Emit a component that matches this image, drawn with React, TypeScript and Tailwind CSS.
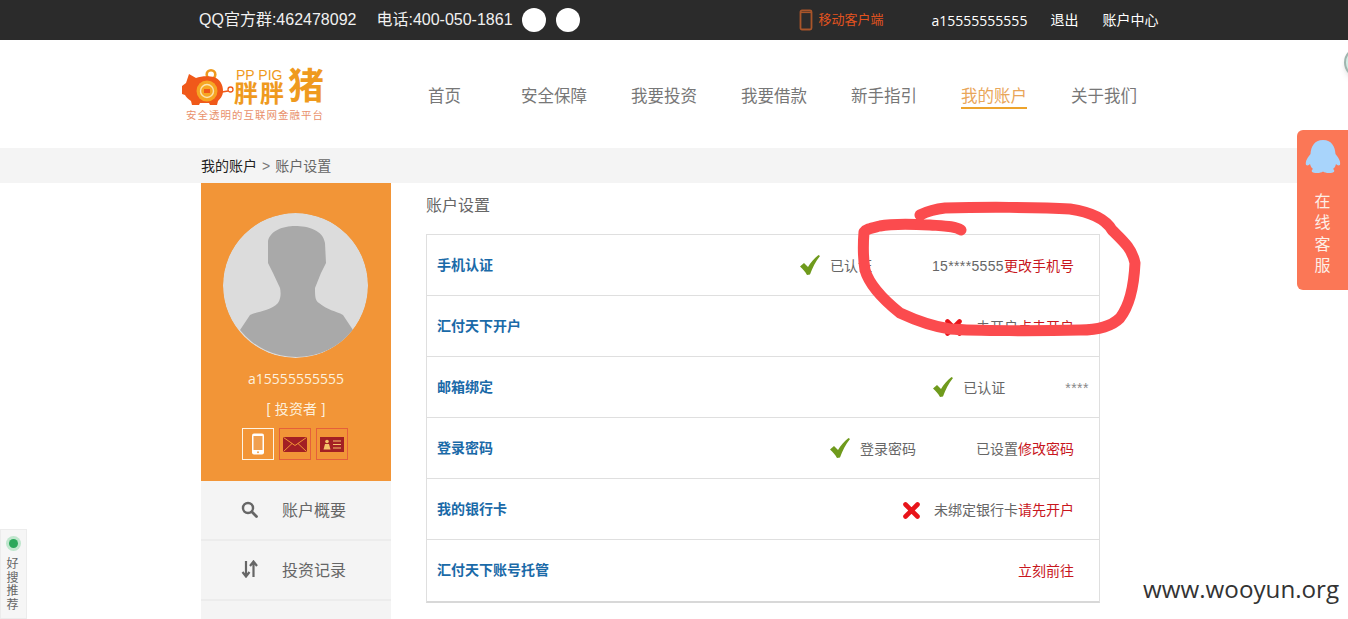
// App.tsx
import React from 'react';

const cjk = "font-['Liberation_Sans','Noto_Sans_CJK_SC',sans-serif]";

const Check = () => (
  <svg width="20" height="20" viewBox="0 0 20 20" className="shrink-0">
    <path d="M0 11.5 L4 8 L8 12 C10.5 7.5 14 3.5 18.5 0 L20 1 C15.5 6.5 12.5 12.5 10 19.5 L7 20 C5 16.5 3 14 0 11.5 Z" fill="#6f9a1c" />
  </svg>
);

const Cross = () => (
  <svg width="17" height="17" viewBox="0 0 17 17" className="shrink-0">
    <path d="M2.5 2.5 L14.5 14.5 M14.5 2.5 L2.5 14.5" stroke="#e8141a" strokeWidth="4.6" strokeLinecap="round" />
  </svg>
);

const Logo = () => (
  <div className="flex w-[145px] flex-col">
    <div className="flex h-[38px] items-end">
      <svg width="53" height="38" viewBox="0 0 53 38" className="shrink-0">
        <circle cx="30" cy="6.5" r="4.3" fill="none" stroke="#ef9a1e" strokeWidth="2.6" />
        <path d="M8 6 L15 10 C20 8 28 8 33 9 C39 11 42 17 42 23 C42 28 39 31 37 33 L36 37 L29 37 L28 35 L19 35 L18 37 L11 37 L10 33 C7 31 5 29 4 27 L1 26 L1 18 L5 15 Z" fill="#f0591a" />
        <circle cx="26" cy="23" r="10.5" fill="#f6a623" />
        <circle cx="26" cy="23" r="6.5" fill="none" stroke="#fbe3b0" strokeWidth="1.4" />
        <rect x="23" y="21" width="6" height="4" fill="#f0591a" />
        <path d="M41 24 L47 23" stroke="#f0591a" strokeWidth="1.4" />
        <circle cx="49.5" cy="21.5" r="2.5" fill="none" stroke="#f0591a" strokeWidth="1.3" />
      </svg>
      <div className="flex items-end">
        <div className="relative w-[54px]">
          <span className="absolute left-[2px] top-[-13px] text-[14px] leading-[13px] whitespace-nowrap text-[#ef9a1e]">PP PIG</span>
          <span className="block text-[24px] leading-[24px] font-bold tracking-[2px] whitespace-nowrap text-[#ef9a1e]">胖胖</span>
        </div>
        <span className="text-[36px] leading-[38px] font-bold text-[#ef9a1e]">猪</span>
      </div>
    </div>
    <span className="mt-[2px] ml-[5px] text-[10.5px] leading-[14px] tracking-[1px] whitespace-nowrap text-[#e9906a] font-['Noto_Sans_CJK_SC',serif]">
      安全透明的互联网金融平台
    </span>
  </div>
);

const navItems = [
  { label: '首页', cls: 'w-[93px]' },
  { label: '安全保障', cls: 'w-[110px]' },
  { label: '我要投资', cls: 'w-[110px]' },
  { label: '我要借款', cls: 'w-[110px]' },
  { label: '新手指引', cls: 'w-[110px]' },
  { label: '我的账户', cls: 'w-[110px]', active: true },
  { label: '关于我们', cls: 'w-[70px]' },
];

const rows = [
  {
    label: '手机认证',
    ok: true,
    status: '已认证',
    gap: 'w-[60px]',
    value: '15****5555',
    valueCls: 'tracking-[0.35px]',
    link: '更改手机号',
    pad: 'pr-[25px]',
  },
  { label: '汇付天下开户', ok: false, status: '未开户', gap: 'w-0', link: '点击开户', pad: 'pr-[25px]', iconGap: 'mr-[14px]' },
  { label: '邮箱绑定', ok: true, status: '已认证', gap: 'w-[60px]', value: '****', valueCls: 'tracking-[0.5px] text-[#888]', pad: 'pr-[10px]' },
  { label: '登录密码', ok: true, status: '登录密码', gap: 'w-[60px]', value: '已设置', link: '修改密码', pad: 'pr-[25px]' },
  { label: '我的银行卡', ok: false, status: '未绑定银行卡', gap: 'w-0', link: '请先开户', pad: 'pr-[25px]', iconGap: 'mr-[14px]' },
  { label: '汇付天下账号托管', link: '立刻前往', pad: 'pr-[25px]' },
];

export default function App() {
  return (
    <div className={`relative h-[619px] w-full overflow-hidden bg-white ${cjk}`}>
      {/* 顶部黑条 */}
      <div className="flex h-10 items-center bg-[#2b2b2b] pl-[199px] text-white">
        <span className="text-[16px] text-[#f1f1f1]">QQ官方群:462478092</span>
        <span className="ml-[20px] text-[16px] text-[#f1f1f1]">电话:400-050-1861</span>
        <span className="ml-[9px] h-6 w-6 rounded-full bg-white" />
        <span className="ml-[10px] h-6 w-6 rounded-full bg-white" />
        <svg width="14" height="22" viewBox="0 0 14 22" className="ml-[219px]">
          <rect x="1.5" y="1.5" width="11" height="19" rx="1.5" fill="none" stroke="#a8552a" strokeWidth="1.8" />
          <path d="M1.5 3.5 H12.5" stroke="#a8552a" strokeWidth="1.2" />
        </svg>
        <span className="ml-[6px] text-[13px] text-[#e2531f]">移动客户端</span>
        <span className="ml-[48px] text-[14px] font-['Open_Sans',sans-serif] text-white">a15555555555</span>
        <span className="ml-[23px] text-[14px]">退出</span>
        <span className="ml-[24px] text-[14px]">账户中心</span>
      </div>

      {/* 头部导航 */}
      <div className="flex h-[108px] items-start bg-white pl-[181px]">
        <div className="mt-[28px]">
          <Logo />
        </div>
        <nav className="ml-[102px] mt-[44px] flex text-[16.5px] text-[#777]">
          {navItems.map((item) => (
            <div key={item.label} className={item.cls}>
              <span
                className={
                  item.active
                    ? 'inline-block h-[24px] border-b-2 border-[#eda32c] leading-[22px] text-[#e9a65a]'
                    : 'inline-block h-[24px] leading-[22px]'
                }
              >
                {item.label}
              </span>
            </div>
          ))}
        </nav>
      </div>

      {/* 面包屑 */}
      <div className="flex h-[35px] items-center bg-[#f4f4f4] pt-px pl-[201px] text-[14px]">
        <span className="text-[#222]">我的账户</span>
        <span className="mx-[5px] text-[#777]">&gt;</span>
        <span className="text-[#666]">账户设置</span>
      </div>

      <div className="flex pl-[201px]">
        {/* 左侧栏 */}
        <aside className="w-[190px] shrink-0">
          <div className="flex h-[298px] flex-col items-center bg-[#f29537] pt-[30px]">
            <svg width="145" height="145" viewBox="0 0 145 145" className="mr-px rounded-full">
              <circle cx="72.5" cy="72.5" r="72.5" fill="#dcdcdc" />
              <path d="M17 117 L27 102 C35 98 48 98 55 90 C58 85 58 80 57 75 L50 60 L45 50 L45 28 C47 18 60 13 72 13 C85 13 100 17 102 30 L103 50 L98 60 L92 75 C92 82 92 88 96 90 C104 97 113 98 120 102 L130 117 A72.5 72.5 0 0 1 17 117 Z" fill="#a9a9a9" />
            </svg>
            <span className="mt-[11px] text-[14px] leading-[20px] font-['Open_Sans',sans-serif] text-[#fdf0dc]">a15555555555</span>
            <span className="mt-[10px] text-[14px] leading-[20px] tracking-[0.2px] text-[#fdf0dc]">[ 投资者 ]</span>
            <div className="mt-[9px] mr-[2px] flex gap-[5px]">
              <div className="flex h-8 w-8 items-center justify-center border border-[#fdf3e3]">
                <svg width="14" height="22" viewBox="0 0 14 22">
                  <rect x="1" y="0.5" width="12" height="21" rx="2" fill="#fff" />
                  <rect x="2.5" y="3" width="9" height="14" fill="#f0a050" />
                  <circle cx="7" cy="19.3" r="1" fill="#f0a050" />
                </svg>
              </div>
              <div className="flex h-8 w-8 items-center justify-center border border-[#e5603a]">
                <svg width="24" height="15" viewBox="0 0 24 15">
                  <rect width="24" height="15" fill="#a31f24" />
                  <path d="M0.5 0.5 L12 8.5 L23.5 0.5 M0.5 14.5 L9 6.5 M23.5 14.5 L15 6.5" fill="none" stroke="#f29537" strokeWidth="1" />
                </svg>
              </div>
              <div className="flex h-8 w-8 items-center justify-center border border-[#e5603a]">
                <svg width="24" height="15" viewBox="0 0 24 15">
                  <rect width="24" height="15" fill="#a31f24" />
                  <circle cx="7" cy="4.5" r="1.8" fill="#f5c26b" />
                  <path d="M3.5 12.5 L5 7 H9 L10.5 12.5 Z" fill="#f5c26b" />
                  <path d="M13 4 H21 M13 7.5 H21 M13 11 H21" stroke="#f5c26b" strokeWidth="1.1" />
                </svg>
              </div>
            </div>
          </div>
          <div className="flex h-[60px] items-center border-b-2 border-[#ececec] bg-[#f4f4f4] pt-px pl-[40px] text-[16px] text-[#666]">
            <svg width="17" height="17" viewBox="0 0 17 17" className="mb-[3px]">
              <circle cx="7" cy="7" r="5" fill="none" stroke="#666" strokeWidth="2.4" />
              <path d="M10.8 10.8 L15.5 15.5" stroke="#666" strokeWidth="2.8" strokeLinecap="round" />
            </svg>
            <span className="ml-[24px]">账户概要</span>
          </div>
          <div className="flex h-[60px] items-center border-b-2 border-[#ececec] bg-[#f4f4f4] pt-px pl-[40px] text-[16px] text-[#666]">
            <svg width="17" height="18" viewBox="0 0 17 18" className="mb-[3px]">
              <path d="M5 1 V15 M1.5 12 L5 16.5 L8.5 12" fill="none" stroke="#666" strokeWidth="2.2" />
              <path d="M12.5 17 V3 M9 6 L12.5 1.5 L16 6" fill="none" stroke="#666" strokeWidth="2.2" />
            </svg>
            <span className="ml-[24px]">投资记录</span>
          </div>
          <div className="h-[40px] bg-[#f4f4f4]" />
        </aside>

        {/* 账户设置 */}
        <main className="ml-[35px] w-[674px]">
          <h2 className="h-[51px] pt-[11px] text-[16px] leading-[24px] font-normal text-[#666]">账户设置</h2>
          <div className="border border-b-2 border-[#dfdfdf] border-b-[#d8d8d8]">
            {rows.map((row, i) => (
              <div
                key={row.label}
                className={
                  i === rows.length - 1
                    ? 'flex h-[61px] items-center pl-[10px] text-[14px] text-[#666]'
                    : 'flex h-[61px] items-center border-b border-[#dfdfdf] pl-[10px] text-[14px] text-[#666]'
                }
              >
                <span className="font-bold text-[#1a6aa8]">{row.label}</span>
                <div className={`ml-auto flex items-center pt-[2px] ${row.pad}`}>
                  {row.ok === true && (
                    <span className="mr-[10px] mb-[2px]">
                      <Check />
                    </span>
                  )}
                  {row.ok === false && (
                    <span className={row.iconGap}>
                      <Cross />
                    </span>
                  )}
                  {row.status && <span>{row.status}</span>}
                  {row.gap && <span className={row.gap} />}
                  {row.value && <span className={row.valueCls}>{row.value}</span>}
                  {row.link && <span className="text-[#c8161d]">{row.link}</span>}
                </div>
              </div>
            ))}
          </div>
        </main>
      </div>

      {/* 右侧在线客服 */}
      <div className="absolute right-0 top-[130px] flex h-[160px] w-[51px] flex-col items-center rounded-l-[6px] bg-[#fb7756] pt-[10px]">
        <svg width="36" height="34" viewBox="0 0 36 34">
          <path d="M18 0 C27 0 30 7 30.5 14 C33 17 36 21 35 25 C33 26 32 25 31 24 C30.5 26 29.5 28 28 29 C29.5 30 30 31.5 28 32.5 C24 33.5 20 33 18 31.5 C16 33 12 33.5 8 32.5 C6 31.5 6.5 30 8 29 C6.5 28 5.5 26 5 24 C4 25 3 26 1 25 C0 21 3 17 5.5 14 C6 7 9 0 18 0 Z" fill="#a8d4fb" />
        </svg>
        <div className="mt-[17px] flex w-4 flex-col text-[16px] leading-[21.4px] text-[#fdeee6]">
          <span>在</span>
          <span>线</span>
          <span>客</span>
          <span>服</span>
        </div>
      </div>

      {/* 右上角露出的圆 */}
      <div className="absolute left-[1344px] top-[47px] h-[31px] w-[31px] rounded-full border-2 border-[#9fb5ae] bg-[#d5ece5] shadow-md" />

      {/* 左下角好搜推荐 */}
      <div className="absolute bottom-0 left-0 flex h-[90px] w-[27px] flex-col items-center border border-[#ececec] bg-[#f6f6f6] pt-[6px]">
        <div className="flex h-[15px] w-[15px] items-center justify-center rounded-full bg-[#bfe6cd]">
          <span className="h-[9px] w-[9px] rounded-full bg-[#2aa85a]" />
        </div>
        <div className="mt-[7px] mr-[2px] flex flex-col text-[12px] leading-[13.5px] text-[#666]">
          <span>好</span>
          <span>搜</span>
          <span>推</span>
          <span>荐</span>
        </div>
      </div>

      {/* 截图上的红色手绘圈 */}
      <svg className="pointer-events-none absolute left-0 top-0" width="1348" height="619" viewBox="0 0 1348 619">
        <path
          d="M961 230 C955 226 945 226 930 225 C910 224 890 224 880 226 C872 228 866 229 864 232 C863 245 863 258 865 270 C869 284 880 297 900 313 C915 320 930 326 950 329 C975 331 1040 331 1080 330 C1100 330 1112 326 1120 318 C1130 305 1134 285 1135 263 C1132 248 1122 240 1112 230 C1105 218 1090 212 1070 209 C1040 207 980 207 945 208 C935 209 926 212 920 215"
          fill="none"
          stroke="#fb4b4e"
          strokeWidth="11"
          strokeLinecap="round"
          strokeLinejoin="round"
        />
      </svg>

      {/* 水印 */}
      <span className="absolute left-[1143px] top-[572px] text-[24.2px] leading-[34px] whitespace-nowrap font-['Open_Sans',sans-serif] text-[#333]">
        www.wooyun.org
      </span>
    </div>
  );
}
